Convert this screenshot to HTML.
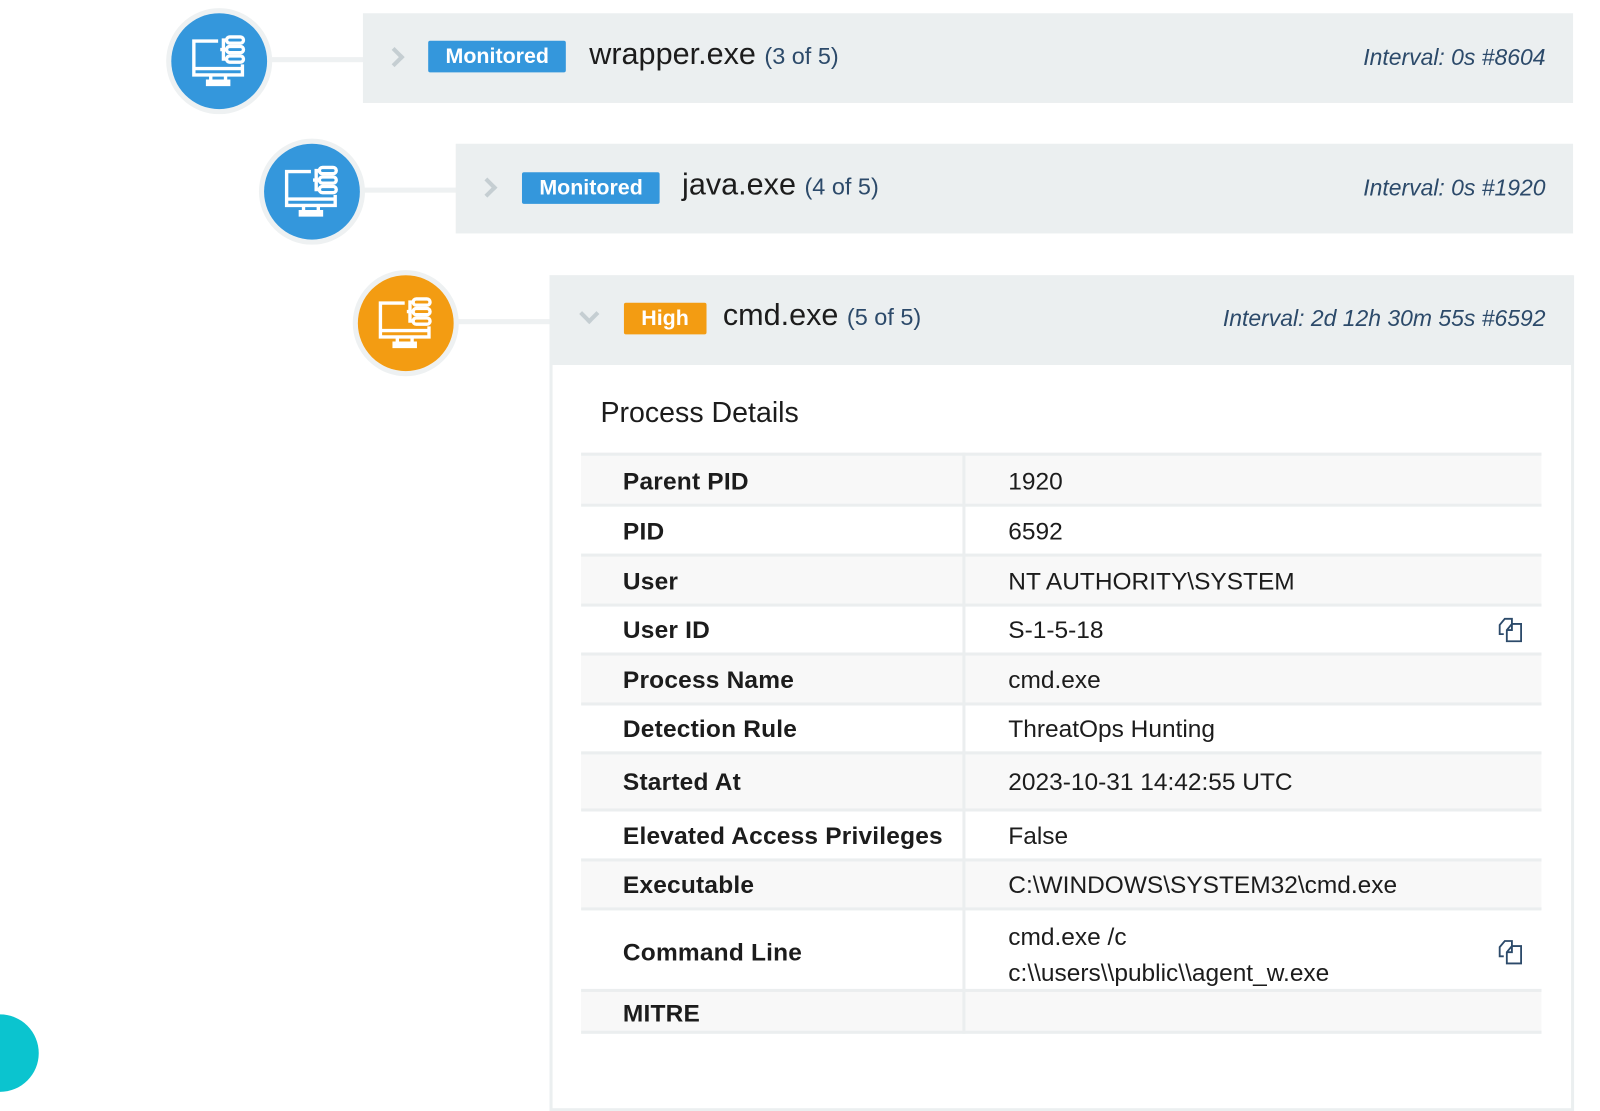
<!DOCTYPE html>
<html><head><meta charset="utf-8"><style>
*{margin:0;padding:0;box-sizing:border-box}
body{width:1600px;height:1065px;background:#fff;font-family:"Liberation Sans",sans-serif;color:#1c1c1c;position:relative;overflow:hidden}
#w{position:absolute;left:0;top:0;width:1570px;height:1045px;transform:scale(1.0195);transform-origin:0 0}
.a{position:absolute}
.circ{position:absolute;width:104px;height:104px;border-radius:50%;border:5px solid #eef1f2}
.circ .in{width:100%;height:100%;border-radius:50%;display:flex;align-items:center;justify-content:center}
.line{position:absolute;height:5px;background:#eef1f2}
.hdr{position:absolute;background:#ebeff0;height:88px;right:27px}
.badge{position:absolute;color:#fff;font-weight:bold;font-size:21px;height:31px;line-height:31px;padding:0 17px;border-radius:2px}
.name{position:absolute;font-size:30px;color:#1c1c1c}
.name small{font-size:23px;color:#2c4a6a}
.int{position:absolute;right:54px;font-size:22.5px;font-style:italic;color:#2c4a6a}
.chv{position:absolute;width:14px;height:14px;border-right:4px solid #c5ced2;border-bottom:4px solid #c5ced2}
.row{position:absolute;left:570px;width:942px;border-top:3px solid #ebeeef;font-size:24px}
.row .k{position:absolute;left:41px;font-weight:bold;letter-spacing:0.2px}
.row .v{position:absolute;left:419px}
.vd{position:absolute;left:944px;width:3px;background:#ebeeef}
</style></head><body><div id="w">
<svg width="0" height="0" style="position:absolute"><defs>
<g id="mon" fill="none" stroke="#fff" stroke-width="3.2">
<path d="M27 6H4v32h46v-10"/><path d="M4 32h46"/><path d="M20 38v5M34 38v5M17 44h20v3H17z"/>
<rect x="35" y="2" width="16" height="6" rx="3"/><rect x="35" y="11" width="16" height="6" rx="3"/><rect x="35" y="20" width="16" height="6" rx="3"/>
<path d="M35 5h-3v18h3M29 14h6"/>
</g></defs></svg>

<div class="circ" style="left:163px;top:8px"><div class="in" style="background:#3497dc"><svg width="58" height="52" viewBox="0 0 56 50"><use href="#mon"/></svg></div></div>
<div class="line" style="left:265px;top:56px;width:92px"></div>
<div class="hdr" style="left:356px;top:13px"></div>
<div class="chv" style="left:380px;top:49px;transform:rotate(-45deg)"></div>
<div class="badge" style="left:420px;top:40px;background:#3497dc">Monitored</div>
<div class="name" style="left:578px;top:37px">wrapper.exe <small>(3 of 5)</small></div>
<div class="int" style="top:44px">Interval: 0s #8604</div>

<div class="circ" style="left:254px;top:136px"><div class="in" style="background:#3497dc"><svg width="58" height="52" viewBox="0 0 56 50"><use href="#mon"/></svg></div></div>
<div class="line" style="left:356px;top:184px;width:92px"></div>
<div class="hdr" style="left:447px;top:141px"></div>
<div class="chv" style="left:471px;top:177px;transform:rotate(-45deg)"></div>
<div class="badge" style="left:512px;top:169px;background:#3497dc">Monitored</div>
<div class="name" style="left:669px;top:165px">java.exe <small>(4 of 5)</small></div>
<div class="int" style="top:172px">Interval: 0s #1920</div>

<div class="circ" style="left:346px;top:265px"><div class="in" style="background:#f39c12"><svg width="58" height="52" viewBox="0 0 56 50"><use href="#mon"/></svg></div></div>
<div class="line" style="left:448px;top:313px;width:92px"></div>
<div class="a" style="left:539px;top:270px;width:1005px;height:820px;border:3px solid #ebeff0;background:#fff"></div>
<div class="hdr" style="left:539px;top:270px;height:88px"></div>
<div class="chv" style="left:571px;top:301px;transform:rotate(45deg)"></div>
<div class="badge" style="left:612px;top:297px;background:#f39c12">High</div>
<div class="name" style="left:709px;top:293px">cmd.exe <small>(5 of 5)</small></div>
<div class="int" style="top:300px">Interval: 2d 12h 30m 55s #6592</div>

<div class="a" style="left:589px;top:389px;font-size:28px">Process Details</div>

<div class="row" style="top:444px;height:50px;background:#f8f8f8"><span class="k" style="top:12px">Parent PID</span><span class="v" style="top:12px">1920</span></div>
<div class="row" style="top:494px;height:49px"><span class="k" style="top:11px">PID</span><span class="v" style="top:11px">6592</span></div>
<div class="row" style="top:543px;height:49px;background:#f8f8f8"><span class="k" style="top:11px">User</span><span class="v" style="top:11px">NT AUTHORITY\SYSTEM</span></div>
<div class="row" style="top:592px;height:48px"><span class="k" style="top:10px">User ID</span><span class="v" style="top:10px">S-1-5-18</span></div>
<div class="row" style="top:640px;height:49px;background:#f8f8f8"><span class="k" style="top:11px">Process Name</span><span class="v" style="top:11px">cmd.exe</span></div>
<div class="row" style="top:689px;height:48px"><span class="k" style="top:10px">Detection Rule</span><span class="v" style="top:10px">ThreatOps Hunting</span></div>
<div class="row" style="top:737px;height:56px;background:#f8f8f8"><span class="k" style="top:14px">Started At</span><span class="v" style="top:14px">2023-10-31 14:42:55 UTC</span></div>
<div class="row" style="top:793px;height:49px"><span class="k" style="top:11px">Elevated Access Privileges</span><span class="v" style="top:11px">False</span></div>
<div class="row" style="top:842px;height:48px;background:#f8f8f8"><span class="k" style="top:10px">Executable</span><span class="v" style="top:10px">C:\WINDOWS\SYSTEM32\cmd.exe</span></div>
<div class="row" style="top:890px;height:80px"><span class="k" style="top:28px">Command Line</span><span class="v" style="top:9px;line-height:35px">cmd.exe /c<br>c:\\users\\public\\agent_w.exe</span></div>
<div class="row" style="top:970px;height:44px;background:#f8f8f8;border-bottom:3px solid #ebeeef"><span class="k" style="top:8px">MITRE</span></div>
<div class="vd" style="top:444px;height:570px"></div>

<svg class="a" style="left:1469px;top:605px" width="26" height="26" viewBox="0 0 26 26" fill="none" stroke="#2c4a6a" stroke-width="1.8"><path d="M6 17H2V8l5-6h7v5"/><path d="M9 24V13l5-6h9v17z"/><path d="M14 7v6H9"/></svg>
<svg class="a" style="left:1469px;top:921px" width="26" height="26" viewBox="0 0 26 26" fill="none" stroke="#2c4a6a" stroke-width="1.8"><path d="M6 17H2V8l5-6h7v5"/><path d="M9 24V13l5-6h9v17z"/><path d="M14 7v6H9"/></svg>

<div class="a" style="left:-38px;top:995px;width:76px;height:76px;border-radius:50%;background:#0bc4cf"></div>
</div></body></html>
